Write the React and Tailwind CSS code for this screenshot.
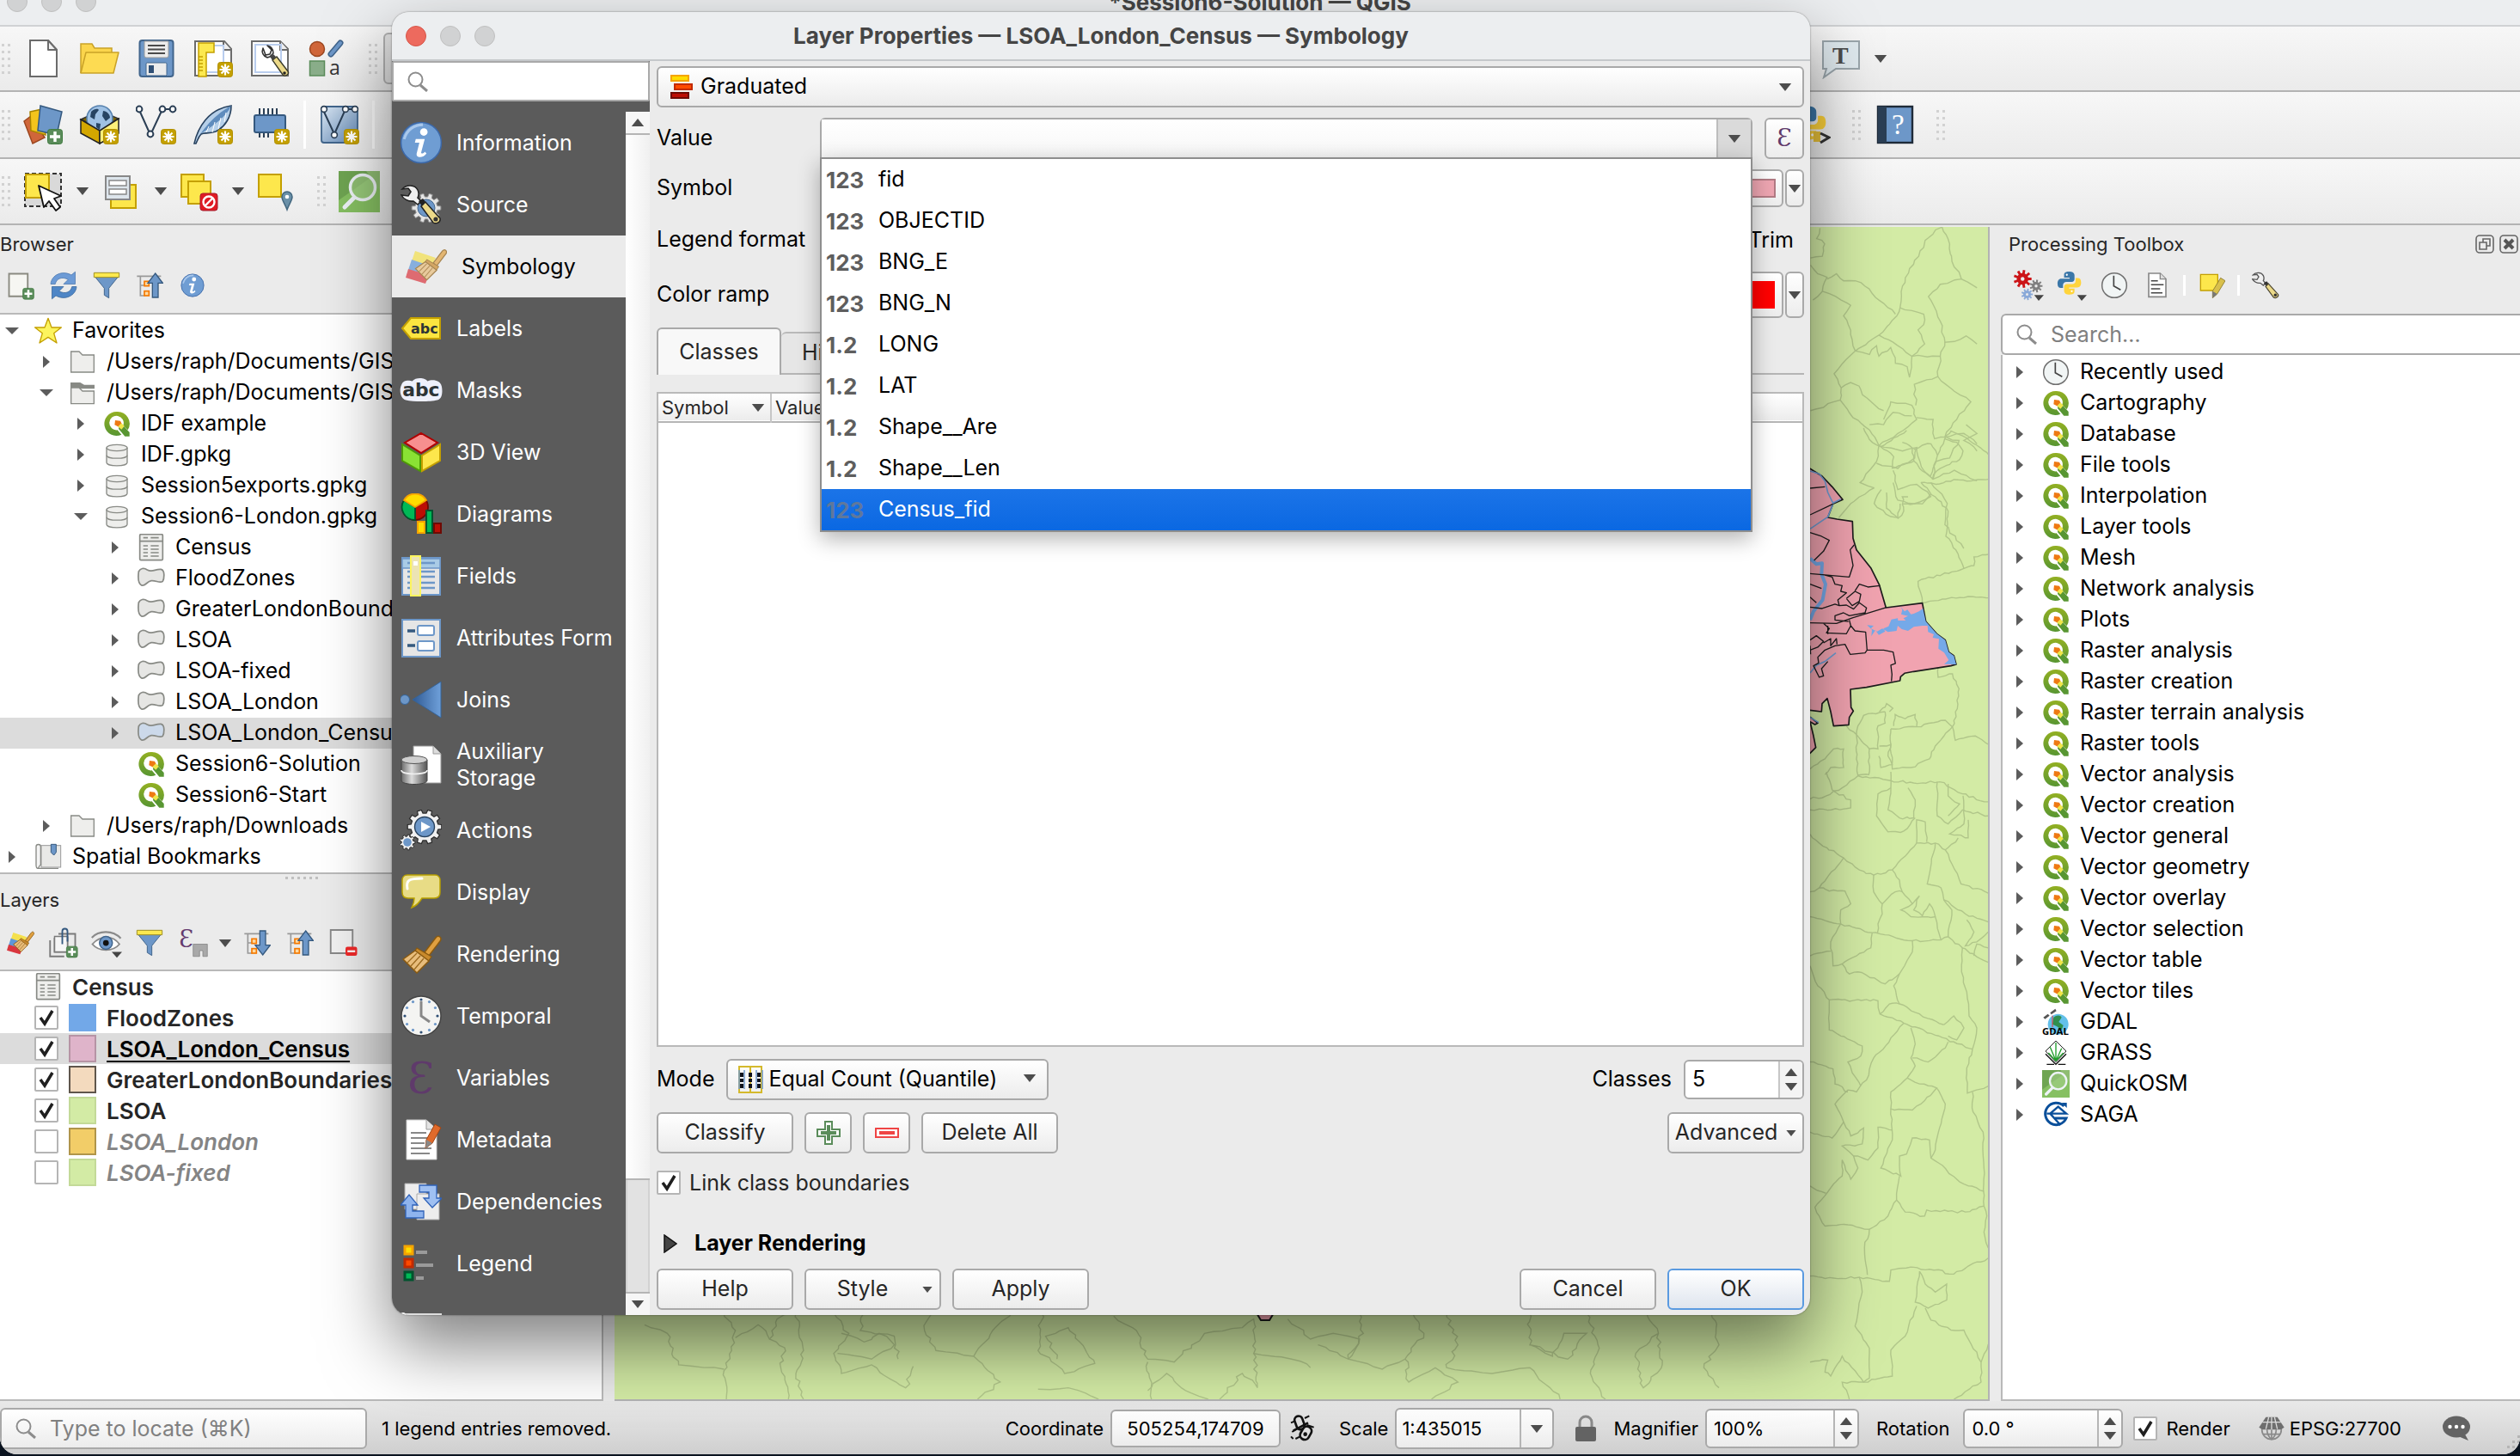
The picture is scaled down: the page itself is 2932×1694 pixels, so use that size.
import React from "react";

/* ---------- small shared drawings ---------- */

function Svg({ size = "size-12", vb = "0 0 48 48", children, className = "" }) {
  return (
    <svg viewBox={vb} className={`${size} shrink-0 ${className}`} fill="none" aria-hidden="true">
      {children}
    </svg>
  );
}

function gear(cx, cy, outer, inner, teeth) {
  let d = "";
  for (let i = 0; i < teeth; i++) {
    const a = (i / teeth) * Math.PI * 2;
    const s = (Math.PI * 2) / teeth;
    const pts = [
      [inner, a - s * 0.3],
      [outer, a - s * 0.2],
      [outer, a + s * 0.2],
      [inner, a + s * 0.3],
    ];
    pts.forEach(([r, t], k) => {
      d += `${i === 0 && k === 0 ? "M" : "L"}${(cx + r * Math.cos(t)).toFixed(1)} ${(cy + r * Math.sin(t)).toFixed(1)}`;
    });
  }
  return d + "Z";
}

const Down = ({ className = "", size = "h-[9px] w-4" }) => (
  <svg viewBox="0 0 16 10" className={`${size} shrink-0 ${className}`} aria-hidden="true">
    <path d="M0 0h16L8 10z" fill="#4d4d4d" />
  </svg>
);
const Up = ({ className = "" }) => (
  <svg viewBox="0 0 16 10" className={`h-[9px] w-4 shrink-0 ${className}`} aria-hidden="true">
    <path d="M0 10h16L8 0z" fill="#4d4d4d" />
  </svg>
);

const NewBadge = ({ x = 28, y = 29 }) => (
  <g transform={`translate(${x} ${y})`}>
    <rect x=".5" y=".5" width="17" height="17" rx="3" fill="#c4a000" stroke="#b08f00" />
    <path d="M9 2.5v13M2.5 9h13M4.5 4.5l9 9M13.5 4.5l-9 9" stroke="#fff" strokeWidth="2.2" />
  </g>
);
const PlusBadge = ({ x = 29, y = 29 }) => (
  <g transform={`translate(${x} ${y})`}>
    <rect x=".5" y=".5" width="17" height="17" rx="3" fill="#5a8c5a" stroke="#3f7a3f" />
    <path d="M9 3v12M3 9h12" stroke="#fff" strokeWidth="3.4" />
  </g>
);

/* ---------- toolbar icons ---------- */

const NewFile = () => (
  <Svg>
    <path d="M9 3h21l10 11v31H9z" fill="#fff" stroke="#6b6b6b" strokeWidth="2" />
    <path d="M30 3v11h10z" fill="#f2f2f2" stroke="#6b6b6b" strokeWidth="2" strokeLinejoin="round" />
  </Svg>
);
const OpenFolder = () => (
  <Svg>
    <path d="M2 41V7h13l3 5h20v6" fill="#fbd54c" stroke="#c9a227" strokeWidth="1.5" />
    <path d="M2 41 8 17h38l-6 24z" fill="#fddb52" stroke="#c9a227" strokeWidth="1.5" strokeLinejoin="round" />
  </Svg>
);
const Save = () => (
  <Svg>
    <rect x="4.5" y="3" width="39" height="42" rx="3" fill="#6d97c8" stroke="#41658c" strokeWidth="2" />
    <path d="M10 4h28v17a2 2 0 0 1-2 2H12a2 2 0 0 1-2-2z" fill="#ececec" stroke="#9a9a9a" />
    <path d="M14 9h20M14 13.500h20M14 18h20" stroke="#4a4a4a" strokeWidth="1.8" />
    <rect x="12" y="29" width="24" height="15" rx="1.500" fill="#ececec" stroke="#41658c" />
    <rect x="15" y="32" width="6" height="9" fill="#2f4f75" />
  </Svg>
);
const NewLayout = () => (
  <Svg>
    <path d="M3 4h34l8 9v31H3z" fill="#fff" stroke="#6b6b6b" strokeWidth="2" />
    <path d="M36 4v10h9" fill="#eee" stroke="#6b6b6b" strokeWidth="2" />
    <rect x="8" y="9" width="28" height="31" stroke="#b9cdee" strokeWidth="2" />
    <path d="M7 6h18v11h-9v28H7z" fill="#fce94f" stroke="#c4a000" strokeWidth="1.500" />
    <path d="M7 22h5M7 26h5M7 30h5M7 34h5M7 38h5" stroke="#c4a000" strokeWidth="1.500" />
    <NewBadge x={29} y={28} />
  </Svg>
);
const Wrench = () => (
  <g>
    <path d="M16 12c-2 5 0 9 5 11l3-1 4-4c0-4-2-8-7-9l5 5-2 5-5 1z" fill="#f4f4f4" stroke="#333" strokeWidth="1.600" strokeLinejoin="round" />
    <path d="m24 22 4-3 3 3-4 4z" fill="#444" />
    <path d="m27 26 5-4 13 17c2 3-3 7-6 4z" fill="#ecd988" stroke="#3a3a2a" strokeWidth="1.400" />
    <circle cx="41" cy="41" r="1.800" fill="#222" />
  </g>
);
const LayoutManager = () => (
  <Svg>
    <path d="M3 4h33l9 9v31H3z" fill="#fff" stroke="#6b6b6b" strokeWidth="2" />
    <path d="M36 4v10h9" fill="#eee" stroke="#6b6b6b" strokeWidth="2" />
    <rect x="7" y="8" width="30" height="32" stroke="#b9cdee" strokeWidth="2" />
    <Wrench />
  </Svg>
);
const StyleManager = () => (
  <Svg>
    <circle cx="13" cy="13" r="8.500" fill="#d0663a" stroke="#9c4720" strokeWidth="1.500" />
    <path d="m40 6-11 13" stroke="#41658c" strokeWidth="7" strokeLinecap="round" />
    <path d="m40 6-11 13" stroke="#6d97c8" strokeWidth="4" strokeLinecap="round" />
    <rect x="4.500" y="27" width="17" height="17" fill="#8aae8a" stroke="#5a8c5a" strokeWidth="1.500" />
    <text x="27" y="43" fontFamily="Open Sans, sans-serif" fontSize="23" fill="#333">a</text>
  </Svg>
);
const DataSource = () => (
  <Svg>
    <path d="m2 20 8-6 16 25-14 7z" fill="#d0663a" stroke="#9c4720" strokeWidth="1.500" />
    <path d="m9 9 14-3 4 30-17-5z" fill="#f4c41c" stroke="#a88400" strokeWidth="1.500" />
    <path d="m21 2 25 7-6 27-22-5z" fill="#6d97c8" stroke="#35597f" strokeWidth="1.500" />
    <PlusBadge />
  </Svg>
);
const GeoPackage = () => (
  <Svg>
    <path d="M2 18 24 8l22 9-21 12z" fill="#7d6500" stroke="#333" strokeWidth="1.500" />
    <circle cx="24" cy="17" r="15" fill="#9fc1e4" stroke="#5580ad" strokeWidth="1.500" />
    <path d="M14 9c4-4 8-4 9-2l-4 5-1 6-5-3zM28 8c4 0 8 4 8 8l-5 4-4-6zM20 22l5 1-1 7-4-3z" fill="#274463" />
    <path d="m2 18 22 13v15L2 34z" fill="#d4a700" stroke="#222" strokeWidth="1.500" />
    <path d="m46 17-22 14v15l22-12z" fill="#fcf07a" stroke="#222" strokeWidth="1.500" />
    <NewBadge />
  </Svg>
);
const Shapefile = () => (
  <Svg>
    <path d="M4 7 17 36 31 6h11" stroke="#2b3f55" strokeWidth="2" />
    {[[4, 6], [17, 35], [31, 6], [43, 6]].map(([x, y]) => (
      <circle key={x} cx={x} cy={y} r="3.400" fill="#fff" stroke="#2b3f55" strokeWidth="2" />
    ))}
    <NewBadge x={29} />
  </Svg>
);
const Feather = () => (
  <Svg>
    <path d="M2 46C6 28 18 6 45 2c0 12-6 24-18 30-8 3-13 1-17 3-3 3-4 7-6 11z" fill="#b5cfe9" stroke="#27415e" strokeWidth="1.600" />
    <path d="M9 35C18 22 30 10 45 2 40 14 26 24 9 35z" fill="#5f8cbd" />
    <path d="m16 33 3-7m4 7 3-12m4 8 3-13m4 5 2-11" stroke="#fff" strokeWidth="1" />
    <NewBadge x={29} />
  </Svg>
);
const Memory = () => (
  <Svg>
    <path d="M12 5v9m5-9v9m5-9v9m5-9v9m5-9v9M12 31v8m5-8v8m5-8v8" stroke="#2b3f55" strokeWidth="2" />
    <rect x="6" y="13" width="36" height="20" rx="2" fill="#6d97c8" stroke="#35597f" strokeWidth="2" />
    <NewBadge x={29} />
  </Svg>
);
const VirtualLayer = () => (
  <Svg>
    <defs>
      <linearGradient id="vl" x1="0" y1="0" x2="1" y2="1">
        <stop stopColor="#dbe8f4" />
        <stop offset="1" stopColor="#5f86b4" />
      </linearGradient>
    </defs>
    <rect x="3" y="3" width="42" height="42" rx="3" fill="url(#vl)" stroke="#41658c" strokeWidth="1.800" />
    <path d="M5 7 18 35 31 6h12" stroke="#2b3f55" strokeWidth="2" />
    {[[6, 6], [18, 36], [31, 6], [42, 6]].map(([x, y]) => (
      <circle key={x} cx={x} cy={y} r="3.400" fill="#fff" stroke="#2b3f55" strokeWidth="1.600" />
    ))}
    <NewBadge x={29} />
  </Svg>
);
const SelectFeatures = () => (
  <Svg>
    <rect x="3" y="3" width="42" height="38" fill="#d9d9d9" stroke="#333" strokeWidth="2" strokeDasharray="5 3" />
    <rect x="4" y="4" width="27" height="27" fill="#fde74c" stroke="#c4a000" strokeWidth="2" />
    <path d="m19 17 6 25 6-7 8 11 5-4-7-10 8-3z" fill="#fff" stroke="#111" strokeWidth="1.800" strokeLinejoin="round" />
  </Svg>
);
const SelectByValue = () => (
  <Svg>
    <rect x="12" y="16" width="29" height="27" fill="#fde74c" stroke="#c4a000" strokeWidth="2" />
    <rect x="6" y="6" width="28" height="27" fill="#dde5ec" stroke="#888" strokeWidth="2" />
    <rect x="10" y="11" width="20" height="6" fill="#fff" stroke="#888" strokeWidth="1.500" />
    <rect x="10" y="21" width="20" height="6" fill="#fff" stroke="#888" strokeWidth="1.500" />
  </Svg>
);
const Deselect = () => (
  <Svg>
    <rect x="3" y="4" width="26" height="26" fill="#fde74c" stroke="#c4a000" strokeWidth="2" />
    <rect x="11" y="12" width="26" height="26" fill="#fde74c" stroke="#c4a000" strokeWidth="2" />
    <rect x="25" y="26" width="20" height="20" rx="3" fill="#e01b24" stroke="#a51d2d" />
    <circle cx="35" cy="36" r="6.500" fill="#e01b24" stroke="#fff" strokeWidth="2.400" />
    <path d="m31 40 8-8" stroke="#fff" strokeWidth="2.400" />
  </Svg>
);
const SelectLocation = () => (
  <Svg>
    <rect x="4" y="4" width="26" height="26" fill="#fde74c" stroke="#c4a000" strokeWidth="2" />
    <path d="M37 45c-3-8-6-11-6-15a6 6 0 0 1 12 0c0 4-3 7-6 15z" fill="#6a90a8" stroke="#43677f" strokeWidth="1.500" />
    <circle cx="37" cy="30" r="2.300" fill="#fff" />
  </Svg>
);
const QuickOsm = ({ size = "size-12" }) => (
  <Svg size={size}>
    <path d="M0 0h48v48H0z" fill="#86c062" />
    <path d="M0 0h48L0 34z" fill="#6fa552" />
    <path d="M48 0v22L32 0z" fill="#8fbd72" />
    <circle cx="28" cy="19" r="14.500" fill="#a3cf88" fillOpacity=".6" stroke="#eef3f7" strokeWidth="3.500" />
    <path d="M18 31 7 42" stroke="#eef3f7" strokeWidth="5" strokeLinecap="round" />
  </Svg>
);
const TextNote = () => (
  <Svg>
    <path d="M4 4h42v32H19L5 46l3-10H4z" fill="#dfe9ee" stroke="#9aa5ab" strokeWidth="2" />
    <text x="15" y="30" fontFamily="Liberation Serif, serif" fontSize="28" fontWeight="bold" fill="#4b4b4b">T</text>
  </Svg>
);
const PyShape = () => (
  <>
    <path d="M24 3c-9 0-9 4-9 7v4h10v2H10c-5 0-7 4-7 9s2 8 6 8h4v-5c0-4 3-6 6-6h10c3 0 5-2 5-5v-7c0-5-4-7-10-7z" fill="#3b77a8" />
    <path d="M25 45c9 0 9-4 9-7v-4H24v-2h15c5 0 7-4 7-9s-2-8-6-8h-4v5c0 4-3 6-6 6H20c-3 0-5 2-5 5v7c0 5 4 7 10 7z" fill="#ffd43b" />
    <circle cx="20" cy="9" r="1.800" fill="#fff" />
    <circle cx="29" cy="39" r="1.800" fill="#fff" />
  </>
);
const Book = () => (
  <Svg>
    <rect x="4" y="3" width="40" height="42" fill="#6d97c8" stroke="#1e2a38" strokeWidth="2.400" />
    <path d="M4 3h10v42H4z" fill="#2b3f55" />
    <text x="20" y="35" fontFamily="Liberation Serif, serif" fontSize="33" fill="#fff">?</text>
  </Svg>
);

/* ---------- panel icons ---------- */

const small = "size-9";
const AddLayer = () => (
  <Svg size={small}>
    <path d="M6 6h29v35H6z" fill="#f6f6f2" stroke="#8a8a80" strokeWidth="2.500" />
    <g transform="translate(0 4)"><PlusBadge x={27} y={24} /></g>
  </Svg>
);
const Refresh = () => (
  <Svg size={small}>
    <path d="M4 22C5 8 22 0 36 8l6-5v19H24l7-7c-9-5-18-2-20 7z" fill="#6d9bd6" stroke="#4a76ad" />
    <path d="M44 26c-1 14-18 22-32 14l-6 5V26h18l-7 7c9 5 18 2 20-7z" fill="#4f86c6" stroke="#35649a" />
  </Svg>
);
const Funnel = () => (
  <Svg size="size-8">
    <path d="M3 8h42L28 29v17l-8-5V29z" fill="#6d97c8" stroke="#41658c" strokeWidth="1.500" />
    <path d="M2 2h44v8H2z" fill="#fce94f" stroke="#a09020" strokeWidth="1.500" />
  </Svg>
);
const TreeArrow = ({ down }) => (
  <Svg size="size-8">
    <path d="M2 8h42M8 8v34h8M8 24h8" stroke="#999" strokeWidth="2.500" />
    <rect x="15" y="17" width="8" height="8" fill="#ffd9a0" stroke="#f57900" strokeWidth="2.500" />
    <rect x="15" y="34" width="8" height="8" fill="#ffd9a0" stroke="#f57900" strokeWidth="2.500" />
    {down ? (
      <path d="m34 45 13-17h-8V3H29v25h-8z" fill="#6d97c8" stroke="#35597f" strokeWidth="2" />
    ) : (
      <path d="M34 3 47 20h-8v25H29V20h-8z" fill="#6d97c8" stroke="#35597f" strokeWidth="2" />
    )}
  </Svg>
);
const Info = ({ size = "size-7" }) => (
  <Svg size={size}>
    <circle cx="24" cy="24" r="22.500" fill="#6f9dd3" stroke="#3c68a8" strokeWidth="1.500" />
    <path d="M5 20C8 10 16 4 26 4" stroke="#a9c8ec" strokeWidth="3" />
    <circle cx="27" cy="12" r="4.200" fill="#fff" />
    <path d="M18 20h10l-4 15c0 2 3 1 4-1l2 2c-3 5-12 6-11 0l3-12h-5z" fill="#fff" />
  </Svg>
);
const Brush = ({ palette = true, size = "size-8", faded }) => (
  <Svg size={size} className={faded ? "opacity-70" : ""}>
    {palette && (
      <>
        <path d="m11 6 24 8-5 10L7 18z" fill="#f4e04d" />
        <path d="m7 16 23 8-3 9L3 28z" fill="#5e97d8" />
        <path d="m3 27 24 7-4 10L0 37z" fill="#d9363e" />
      </>
    )}
    <g transform={palette ? "translate(9 2) scale(.82)" : undefined}>
      <path d="m28 22 13-17c3-4 8 0 5 4L33 26z" fill="#e0a040" stroke="#8a5a10" strokeWidth="1.500" />
      <path d="m19 17 17 10-4 6-16-11z" fill="#c98a2c" stroke="#8a5a10" strokeWidth="1.200" />
      <path d="M17 20 3 30l16 16 14-14z" fill="#e8bd7c" stroke="#8a5a10" strokeWidth="1.500" />
      <path d="M19 23 8 34m15-8L12 38m15-9L16 42" stroke="#9c6a20" strokeWidth="1.300" />
    </g>
  </Svg>
);
const AddGroup = () => (
  <Svg size={small}>
    <path d="M16 10h26v26M10 16v22h20V14M3 20v25h22" stroke="#7a7a7a" strokeWidth="2.500" />
    <path d="M10 14h20v24H10z" fill="#f6f6f6" stroke="#7a7a7a" strokeWidth="2" />
    <path d="M22 26V6a4 4 0 0 1 8 0v16" stroke="#35597f" strokeWidth="2.500" />
    <g transform="translate(0 2)"><PlusBadge x={28} y={27} /></g>
  </Svg>
);
const Eye = () => (
  <Svg size={small}>
    <path d="M1 16C12 4 34 4 46 17" stroke="#8a8a8a" strokeWidth="3" />
    <path d="M2 26c12-14 32-14 42 0-10 12-32 12-42 0z" fill="#fff" stroke="#8a8a8a" strokeWidth="2.500" />
    <circle cx="23" cy="24" r="10" fill="#6d97c8" stroke="#41658c" strokeWidth="2" />
    <circle cx="23" cy="24" r="4.500" fill="#111" />
    <path d="M32 38h16l-8 9z" fill="#444" />
  </Svg>
);
const EpsFilter = () => (
  <Svg size={small}>
    <text x="3" y="30" fontFamily="DejaVu Serif, serif" fontSize="36" fill="#643b6f">Ɛ</text>
    <path d="M25 26h22v19h-7v-9h-5v9H25z" fill="#a9a9a9" stroke="#7f7f7f" />
  </Svg>
);
const RemoveLayer = () => (
  <Svg size={small}>
    <path d="M5 4h34v36H5z" fill="#f1f1f1" stroke="#888" strokeWidth="2.500" />
    <rect x="28" y="30" width="18" height="14" rx="3" fill="#ef2929" />
    <path d="M31 37h12" stroke="#fff" strokeWidth="3" />
  </Svg>
);
const Gears = () => (
  <Svg size={small}>
    <path d={gear(15, 14, 14, 9, 9)} fill="#cc1417" />
    <circle cx="15" cy="14" r="3" fill="#ebebeb" />
    <path d={gear(36, 25, 10, 6.5, 9)} fill="#7f7f7f" />
    <circle cx="36" cy="25" r="2.300" fill="#ebebeb" />
    <path d={gear(22, 38, 9, 6, 9)} fill="#8aa9d8" />
    <circle cx="22" cy="38" r="2" fill="#ebebeb" />
    <path d="M33 39h15l-8 9z" fill="#444" />
  </Svg>
);
const PythonSmall = () => (
  <Svg size={small}>
    <g transform="scale(.85)"><PyShape /></g>
    <path d="M33 39h15l-8 9z" fill="#444" />
  </Svg>
);
const Clock = ({ size = "size-8" }) => (
  <Svg size={size}>
    <circle cx="24" cy="24" r="21.500" fill="#f1f5f5" stroke="#6f6f6f" strokeWidth="2.200" />
    <path d="M23 7v18l12 7" stroke="#444" strokeWidth="2.500" />
  </Svg>
);
const Report = () => (
  <Svg size="size-8">
    <path d="M9 3h20l10 10v31H9z" fill="#fff" stroke="#888" strokeWidth="2.500" />
    <path d="M29 3v10h10" fill="#ddd" stroke="#888" strokeWidth="2" />
    <path d="M13 16h12M13 23h22M13 30h16M13 37h20" stroke="#444" strokeWidth="2.200" />
  </Svg>
);
const EditNote = () => (
  <Svg size="size-8">
    <path d="M5 5h30v28H5z" fill="#fde74c" stroke="#c4a000" strokeWidth="2" />
    <path d="m26 34 14-23 8 5-14 23-8 7z" fill="#d9c04c" stroke="#8a7a30" strokeWidth="1.300" />
    <path d="m26 34 8 5-8 7z" fill="#777" />
  </Svg>
);
const wrenchHead = "M2 6c5-6 15-5 18 1 2 4 1 7 0 9l4 4-4 4-5-4c-6 1-12-3-14-7l8 1 3-5-3-4z";
const Options = () => (
  <Svg size="size-8">
    <path d={wrenchHead} fill="#f0f0f0" stroke="#555" strokeWidth="2" />
    <path d="m21 20 5-3 4 5-5 4z" fill="#333" />
    <path d="m24 26 5-5 17 19c1 5-5 7-8 5z" fill="#ecd988" stroke="#4a4430" strokeWidth="1.800" />
    <circle cx="41" cy="41" r="2.600" fill="#333" />
  </Svg>
);

/* ---------- tree icons ---------- */

const QIcon = () => (
  <Svg size="size-8">
    <defs>
      <linearGradient id="qg" x1="0" y1="0" x2="0" y2="1">
        <stop stopColor="#93b023" />
        <stop offset="1" stopColor="#589632" />
      </linearGradient>
    </defs>
    <path d="M24 3a21 21 0 1 0 8 40l-7-8a12.500 12.500 0 1 1 10-8l8 8A21 21 0 0 0 24 3z" fill="url(#qg)" />
    <path d="m28 27 6-1 12 13v7h-8L27 33z" fill="#589632" />
    <path d="m21 18 9 1 3 6-5 5-8-4z" fill="#ee7913" />
    <path d="m26 29 6-6 5 5-5 6z" fill="#f0e64a" />
  </Svg>
);
const Star = () => (
  <Svg size="size-8">
    <path d="m24 2 6 16h17L34 28l5 17-15-10L9 45l5-17L1 18h17z" fill="#fcf45e" stroke="#c4a000" strokeWidth="2" strokeLinejoin="round" />
  </Svg>
);
const Folder = ({ open }) => (
  <Svg size="size-8">
    {open && <path d="M3 6h17l7 4h18v7H3z" fill="#888a85" />}
    <path d={open ? "M4 15h14l6 6h20v22H4z" : "M4 6h14l6 6h20v30H4z"} fill="#eeeeec" stroke="#888a85" strokeWidth="2" />
  </Svg>
);
const Database = () => (
  <Svg size="size-8">
    <path d="M6 12v26c0 7 36 7 36 0V12" fill="#eeeeec" stroke="#888a85" strokeWidth="2" />
    <ellipse cx="24" cy="12" rx="18" ry="5.500" fill="#eeeeec" stroke="#888a85" strokeWidth="2" />
    <path d="M6 25c0 7 36 7 36 0" stroke="#888a85" strokeWidth="2" />
  </Svg>
);
const TableIcon = () => (
  <Svg size="size-8">
    <rect x="4" y="1" width="40" height="45" rx="2" fill="#eeeeec" stroke="#888a85" strokeWidth="2.500" />
    <path d="M4 13h40M10 7h8m5 0h14M10 21h8m5 0h14M10 27h8m5 0h14M10 33h8m5 0h14M10 39h8m5 0h14" stroke="#888a85" strokeWidth="2.400" />
  </Svg>
);
const Polygon = ({ active }) => (
  <Svg size="size-8">
    <path
      d="M2 12c3-6 9-7 15-3 9 5 14-2 24-1 8 2 5 18 3 21-5 4-12-2-20-1-9 2-10 10-17 8C1 33 1 20 2 12z"
      fill={active ? "#ccd9ea" : "#e6e6e4"}
      stroke="#888a85"
      strokeWidth="2.600"
    />
  </Svg>
);
const Bookmarks = () => (
  <Svg size="size-8">
    <rect x="12" y="4" width="34" height="38" fill="#e9e9e7" stroke="#999" strokeWidth="1.500" />
    <path d="M3 6c0-5 8-5 8 0v32c-3 0-3 6-5 6-3 0-3-4-3-6z" fill="#f4f4f4" stroke="#888a85" strokeWidth="2" />
    <path d="M6 44h36" stroke="#888a85" strokeWidth="2" />
    <path d="M29 2h9v14l-4 5-5-5z" fill="#6d97c8" stroke="#35597f" strokeWidth="1.500" />
  </Svg>
);
const Gdal = () => (
  <Svg size="size-8">
    <circle cx="28" cy="28" r="18" fill="#63c0ea" />
    <path d="M20 16c6-5 12-4 14 0l-5 8 8 6-3 8-8-6-8-4z" fill="#2f8f4e" />
    <path d="m2 16 8-6 3 3-8 6zM14 8l9-7 2 4-9 6z" fill="#555" />
    <path d="M18 13v20" stroke="#e33" strokeWidth="1.500" />
    <text x="0" y="47" fontFamily="Open Sans, sans-serif" fontWeight="bold" fontSize="17" fill="#000">GDAL</text>
  </Svg>
);
const Grass = () => (
  <Svg size="size-8">
    <path d="m24 3 18 18-18 19L6 21z" stroke="#222" strokeWidth="1.500" fill="#fff" />
    <path d="M6 26l18 18 18-18M8 44h13m7 0h13" stroke="#111" strokeWidth="2" />
    <path d="M24 38V6m0 32L14 14m10 24 10-22M24 38 11 24m13 14 13-14" stroke="#1f9d2a" strokeWidth="2" />
  </Svg>
);
const Saga = () => (
  <Svg size="size-8">
    <path d="M38 9A19 19 0 1 0 42 30H22" stroke="#0a4f9a" strokeWidth="4.500" />
    <path d="M8 22h34L28 10 14 22l18 20" stroke="#0a4f9a" strokeWidth="3.600" />
    <path d="M34 3h9v9z" fill="#0a4f9a" />
  </Svg>
);

/* ---------- dialog sidebar icons ---------- */

const SourceIcon = () => (
  <Svg size="size-12">
    <path d={gear(30, 28, 17, 13, 10)} fill="#e5e5e5" stroke="#8f8f8f" />
    <circle cx="30" cy="28" r="10" fill="#6d97c8" stroke="#41658c" />
    <path d={wrenchHead} fill="#f0f0f0" stroke="#222" strokeWidth="1.600" />
    <path d="m21 20 5-3 4 5-5 4z" fill="#222" />
    <path d="m24 26 5-5 17 19c1 5-5 7-8 5z" fill="#ecd988" stroke="#222" strokeWidth="1.500" />
    <circle cx="41" cy="41" r="2.600" fill="#333" />
  </Svg>
);
const LabelsIcon = () => (
  <Svg size="size-12">
    <path d="m2 24 10-12h34v24H12z" fill="#fce540" stroke="#c4a000" strokeWidth="2" />
    <text x="12" y="30" fontFamily="DejaVu Sans, sans-serif" fontWeight="bold" fontSize="16" fill="#2d3436">abc</text>
  </Svg>
);
const MasksIcon = () => (
  <Svg size="size-[50px]">
    <path d="M2 18c2-6 9-5 12-4 4-5 15-4 17 0 6-3 15-1 16 6 1 5 1 14-5 15-8 2-27 2-35 0-6-1-8-11-5-17z" fill="#eef0fb" />
    <text x="3" y="31" fontFamily="DejaVu Sans, sans-serif" fontWeight="bold" fontSize="21" fill="#2d3436">abc</text>
  </Svg>
);
const CubeIcon = () => (
  <Svg size="size-12">
    <path d="m24 2 19 11-19 12L5 13z" fill="#f78f8f" stroke="#b00000" strokeWidth="2" />
    <path d="m2 15 21 13v18L2 34z" fill="#8ae234" stroke="#4e9a06" strokeWidth="2" />
    <path d="M46 15 25 28v18l21-12z" fill="#fde74c" stroke="#c4a000" strokeWidth="2" />
  </Svg>
);
const DiagramsIcon = () => (
  <Svg size="size-12">
    <circle cx="17" cy="16" r="15" fill="#bb0e05" stroke="#6e0a04" strokeWidth="1.800" />
    <path d="M17 16v15A15 15 0 0 1 4 8z" fill="#00b956" stroke="#00532e" strokeWidth="1.800" />
    <path d="M17 16 4 8a15 15 0 0 1 26 0z" fill="#ffdc00" stroke="#f5a400" strokeWidth="1.800" />
    <rect x="20" y="33" width="8" height="13" fill="#ffdc00" stroke="#f5a400" strokeWidth="2" />
    <rect x="30" y="20" width="7" height="26" fill="#00b956" stroke="#00532e" strokeWidth="2" />
    <rect x="39" y="35" width="8" height="11" fill="#bb0e05" stroke="#6e0a04" strokeWidth="2" />
  </Svg>
);
const FieldsIcon = () => (
  <Svg size="size-12">
    <rect x="2" y="3" width="44" height="43" fill="#e6e6e6" stroke="#6d97c8" strokeWidth="2" />
    <path d="M2 4h44v11H2z" fill="#a9cbe6" stroke="#6d97c8" strokeWidth="1.500" />
    <path d="M8 9h32M8 19h32M8 25h32M8 32h32M8 38h32" stroke="#6d97c8" strokeWidth="2.400" />
    <rect x="12" y="1" width="11" height="46" fill="#ece4b4" stroke="#fcf45e" strokeWidth="2" />
    <rect x="15" y="7" width="5" height="5" fill="#fff" />
  </Svg>
);
const FormIcon = () => (
  <Svg size="size-12">
    <rect x="2" y="3" width="44" height="43" fill="#e6e6e6" stroke="#6d97c8" strokeWidth="2" />
    <path d="M8 16h9M8 33h9" stroke="#35597f" strokeWidth="3.500" />
    <rect x="20" y="10" width="19" height="11" rx="2" fill="#fff" stroke="#6d97c8" strokeWidth="2" />
    <rect x="20" y="28" width="19" height="11" rx="2" fill="#fff" stroke="#6d97c8" strokeWidth="2" />
  </Svg>
);
const JoinsIcon = () => (
  <Svg size="size-12">
    <defs>
      <linearGradient id="jn"><stop stopColor="#2f5a94" /><stop offset="1" stopColor="#6fa0da" /></linearGradient>
    </defs>
    <circle cx="5" cy="24" r="5.500" fill="#6d97c8" stroke="#35649a" />
    <path d="M14 24 47 3v42z" fill="url(#jn)" stroke="#35649a" />
  </Svg>
);
const StorageIcon = () => (
  <Svg size="size-12">
    <defs>
      <linearGradient id="st"><stop stopColor="#6b6b6b" /><stop offset=".4" stopColor="#dcdcdc" /><stop offset="1" stopColor="#555" /></linearGradient>
    </defs>
    <path d="M15 2h23l9 9v34H15z" fill="#fff" stroke="#999" />
    <path d="M38 2v9h9" fill="#ddd" stroke="#999" />
    <path d="M1 18v24c0 6 30 6 30 0V18z" fill="url(#st)" stroke="#444" />
    <ellipse cx="16" cy="18" rx="15" ry="4.500" fill="#cfcfcf" stroke="#555" />
    <path d="M1 30c0 6 30 6 30 0" stroke="#f0f0f0" strokeWidth="1.600" />
  </Svg>
);
const ActionsIcon = () => (
  <Svg size="size-12">
    <path d={gear(28, 20, 20, 16, 10)} fill="#f0f0f0" stroke="#2a2a2a" strokeWidth="1.200" />
    <circle cx="28" cy="20" r="11.500" fill="#6d97c8" stroke="#27415e" strokeWidth="1.400" />
    <path d="m24 14 11 6-11 6z" fill="#fff" />
    <path d={gear(8, 38, 9, 7, 9)} fill="#f0f0f0" stroke="#2a2a2a" />
    <circle cx="8" cy="38" r="4.800" fill="#6d97c8" />
  </Svg>
);
const DisplayIcon = () => (
  <Svg size="size-12">
    <path d="M8 4h32c4 0 6 3 6 6v14c0 5-3 7-7 7H25c-3 5-7 9-12 11 2-4 3-8 3-11H9c-4 0-7-2-7-7V10c0-3 2-6 6-6z" fill="#e8dc86" stroke="#b8a000" strokeWidth="1.500" />
    <path d="M8 20c-2-10 2-12 17-12" stroke="#fff" strokeWidth="3" strokeLinecap="round" />
  </Svg>
);
const TemporalIcon = () => (
  <Svg size="size-12">
    <circle cx="24" cy="24" r="23" fill="#f4f4f2" stroke="#444" strokeWidth="1.500" />
    {Array.from({ length: 12 }, (_, i) => (
      <circle
        key={i}
        cx={24 + 19 * Math.cos((i * Math.PI) / 6)}
        cy={24 + 19 * Math.sin((i * Math.PI) / 6)}
        r="1.600"
        fill={i % 3 ? "#6d97c8" : "#2f4f75"}
      />
    ))}
    <path d="M24 7v17l10 7" stroke="#888" strokeWidth="3" />
  </Svg>
);
const VariablesIcon = () => (
  <Svg size="size-12">
    <text x="8" y="42" fontFamily="DejaVu Serif, serif" fontSize="50" fill="#5f3a6b">Ɛ</text>
  </Svg>
);
const MetadataIcon = () => (
  <Svg size="size-12">
    <path d="M7 1h23l12 11v35H7z" fill="#fff" stroke="#ccc" />
    <path d="M30 1v11h12" fill="#e4e4e4" stroke="#999" />
    <path d="M12 16h18M12 22h20M12 28h16M12 34h24M12 40h22" stroke="#888" strokeWidth="1.800" />
    <path d="m30 24 10-18 7 4-10 18-8 6z" fill="#e06a2b" stroke="#a34512" />
    <path d="m30 24 7 4-8 6z" fill="#888" />
  </Svg>
);
const DependenciesIcon = () => (
  <Svg size="size-12">
    <path d="M5 3h25v30H5z" fill="#ededed" stroke="#aaa" />
    <path d="M19 15h26v30H19z" fill="#ededed" stroke="#aaa" />
    <path d="M22 5h20v15h6L37 31 27 20h6v-7H22z" fill="#9fc0f2" stroke="#2f62b8" strokeWidth="1.300" />
    <path d="M27 43H6V28H0l10-12 10 12h-6v7h13z" fill="#8fb4ee" stroke="#2f62b8" strokeWidth="1.300" />
  </Svg>
);
const LegendIcon = () => (
  <Svg size="size-12">
    <rect x="5" y="4" width="9" height="9" fill="#ffdc00" stroke="#f5a400" strokeWidth="3" />
    <rect x="5" y="19" width="9" height="9" fill="#ff4a00" stroke="#c22a00" strokeWidth="3" />
    <rect x="5" y="34" width="9" height="9" fill="#00b956" stroke="#00532e" strokeWidth="3" />
    <path d="M18 11h13M18 26h20M18 41h9" stroke="#9a9a9a" strokeWidth="4" />
  </Svg>
);
const LayoutIcon = () => (
  <Svg size="size-12">
    <path d="M2 12h44v32H2z" fill="#6d97c8" stroke="#ddd" strokeWidth="4" />
    <path d="M5 15h38" stroke="#222" strokeWidth="2" />
    <circle cx="3" cy="12" r="3" fill="#f4f4f4" />
  </Svg>
);

/* ---------- form parts ---------- */

function Check({ label, defaultChecked, hideLabel, gap = "gap-3", className = "" }) {
  return (
    <label className={`flex items-center leading-7 ${gap} ${className}`}>
      <span className="grid size-7 shrink-0">
        <input
          type="checkbox"
          defaultChecked={defaultChecked}
          aria-label={hideLabel ? label : undefined}
          className="peer col-start-1 row-start-1 size-7 appearance-none rounded-xs border-2 border-[#b5b5b5] bg-white"
        />
        <svg viewBox="0 0 28 28" className="pointer-events-none invisible col-start-1 row-start-1 size-7 peer-checked:visible" fill="none" aria-hidden="true">
          <path d="m7 14 5 7L21 6" stroke="#1f1f1f" strokeWidth="3.500" />
        </svg>
      </span>
      {!hideLabel && <span>{label}</span>}
    </label>
  );
}

const shade = "bg-linear-to-b from-white to-[#ececec] border-2 border-[#a9a9a9] rounded-md";

function Push({ children, className = "", ...rest }) {
  return (
    <button type="button" className={`flex h-12 items-center justify-center ${shade} ${className}`} {...rest}>
      {children}
    </button>
  );
}

function Grip({ className = "" }) {
  return (
    <span className={`grid shrink-0 grid-cols-2 gap-x-1 gap-y-[5px] ${className}`}>
      {Array.from({ length: 10 }, (_, i) => (
        <span key={i} className="size-[3px] bg-[#d2d2d2]" />
      ))}
    </span>
  );
}

function Lens({ className = "" }) {
  return (
    <svg viewBox="0 0 24 24" className={`size-6 shrink-0 ${className}`} fill="none" aria-hidden="true">
      <circle cx="9.500" cy="9.500" r="8" stroke="#8c8c8c" strokeWidth="2" />
      <path d="m15 16 8 7" stroke="#8c8c8c" strokeWidth="3" />
    </svg>
  );
}

const Tool = ({ label, children, className = "w-[66px]" }) => (
  <button type="button" aria-label={label} className={`flex shrink-0 items-center justify-center ${className}`}>
    {children}
  </button>
);

/* ---------- map ---------- */

function rough(points, amp, seed) {
  let s = seed * 7919 + 17;
  const rnd = () => {
    s = (s * 1103515245 + 12345) % 2147483648;
    return s / 2147483648 - 0.5;
  };
  let d = `M${points[0][0]} ${points[0][1]}`;
  for (let i = 1; i < points.length; i++) {
    const [x0, y0] = points[i - 1];
    const [x1, y1] = points[i];
    const n = Math.max(1, Math.round(Math.hypot(x1 - x0, y1 - y0) / 14));
    for (let k = 1; k <= n; k++) {
      const t = k / n;
      const j = k === n ? 0 : amp;
      d += `L${(x0 + (x1 - x0) * t + rnd() * j).toFixed(1)} ${(y0 + (y1 - y0) * t + rnd() * j).toFixed(1)}`;
    }
  }
  return d;
}

function parse(str) {
  const n = str.split(" ").map(Number);
  const out = [];
  for (let i = 0; i < n.length; i += 2) out.push([n[i], n[i + 1]]);
  return out;
}

const northLines = [
  "1494 652 1480 660 1458 690 1455 710 1425 770 1410 820 1405 880 1398 905 1360 960 1310 1005",
  "1494 652 1510 700 1515 750 1530 780 1535 800 1568 825",
  "1535 800 1490 815 1465 850 1490 920 1500 980 1520 978 1545 962 1568 985",
  "1235 655 1228 685 1245 700 1240 735 1215 740",
  "1215 760 1230 785 1250 795 1240 835 1220 860",
  "1250 800 1270 785 1285 805 1310 805 1330 820 1360 860 1395 900",
  "1240 835 1280 860 1300 875 1285 905 1295 930 1305 990 1310 1005",
  "1405 882 1430 890 1455 900 1455 930 1443 945 1457 985 1430 1020",
  "1310 1005 1340 1015 1355 990 1360 1020 1385 995 1395 1040 1420 1050 1425 1080 1430 1020",
  "1360 960 1390 980 1430 1020 1490 1020 1500 980",
  "1490 1020 1485 1078 1435 1100 1438 1160",
  "1485 1078 1520 1120 1555 1150 1525 1200 1500 1250",
  "1310 1005 1290 1030 1265 1070 1280 1110 1278 1145 1215 1175",
  "1278 1145 1305 1195 1340 1230 1360 1275",
  "1280 1110 1300 1095 1318 1105 1325 1130 1370 1175",
  "1370 1200 1385 1150 1430 1160 1440 1200 1400 1240 1360 1275 1355 1320 1320 1380 1350 1395",
  "1440 1195 1475 1200 1478 1255 1500 1250 1540 1240 1568 1270",
  "1340 1215 1370 1215 1390 1180 1430 1190",
  "1360 1275 1410 1290 1440 1280 1436 1310 1400 1340 1355 1325",
  "1350 1395 1300 1440 1275 1480",
  "1390 1345 1400 1400 1440 1385 1470 1420 1435 1440 1400 1430 1390 1380",
  "1440 1280 1450 1335 1475 1370 1520 1345 1568 1375",
  "1470 1380 1505 1440 1500 1500 1540 1568",
  "1475 1370 1480 1320 1510 1310 1530 1260 1490 1250",
  "1365 1400 1350 1440 1375 1470 1400 1480 1405 1440",
  "1545 1215 1568 1240 1540 1260 1568 1290",
];
const eastLines = [
  "265 0 285 40 325 65 415 8",
  "325 65 370 100 365 140 440 115 435 70 400 50",
  "440 115 470 150 498 168 523 95 548 38 590 50 612 80 600 110 555 130 520 150 505 180",
  "440 75 470 60 500 55 523 95",
  "548 38 570 10 625 35 660 60 703 95",
  "465 190 515 240 560 290 552 378 595 440 615 490 455 535 470 610",
  "615 490 650 480 650 450 703 440",
  "470 610 540 597 630 588 703 593",
  "465 190 530 195 580 180 640 185 703 178",
  "345 225 345 280 385 315 405 290 400 240 420 240",
  "400 265 470 265 500 230",
  "525 835 525 870 575 858 598 910 592 980 575 1043 585 1090 655 1075 703 1105",
  "575 1043 515 1110 495 1155 430 1185 365 1190 360 1105",
  "575 1043 550 1020 450 1043 360 1050",
  "340 990 265 1003 245 1040 240 1070 285 1120 283 1210 245 1212 240 1070",
  "205 1040 240 1070",
  "340 990 340 1030 315 1040 315 1120 283 1120",
  "320 990 345 962 367 978 355 990",
  "370 1040 375 1000 410 1015 445 1000 450 1043",
  "78 1190 130 1155 160 1120 195 1120 195 1185 150 1185 130 1210",
  "320 1110 360 1105 350 1145 365 1175 325 1185 318 1145",
  "360 1105 360 1050",
];
const southLines = [
  "18 68 75 60 130 40 185 10 300 22 380 28 470 25 550 55 640 75",
  "75 0 95 45 160 70 160 90 92 95 18 95",
  "300 0 300 40 290 95 330 115 380 115 385 70 360 40",
  "300 40 255 55 250 110 290 150 345 148 385 115",
  "462 25 462 110 500 130 550 95 640 110",
  "500 30 500 60 540 80 500 110",
  "552 60 555 130 505 155 570 165 570 120",
  "18 156 50 178 135 215 190 245 240 258 305 245 390 178 455 178 490 195 545 280 640 303",
  "240 258 240 300 270 330 270 355 255 380 253 403",
  "390 178 390 120 420 125 425 175",
  "455 178 427 280 475 290 485 320 560 355 640 375",
  "490 195 535 165",
  "18 362 125 380 235 402 375 422 475 420 500 412 550 440 640 476",
  "485 320 513 345 500 412",
  "50 290 135 215",
  "18 300 50 290 85 298 140 298 160 330 125 345 125 380",
  "305 245 330 270 340 300 375 330 335 345 370 362 455 362 475 420",
  "340 300 315 300 270 330",
  "375 330 400 310 380 345 410 360 435 330 455 362",
  "125 380 90 425 98 485 130 480 180 460 230 440 235 402",
  "130 480 155 505 185 500 280 530 330 505 375 450 375 422",
  "18 460 90 448",
  "330 505 310 535 330 580",
  "565 370 590 400 560 435 600 425 640 400",
  "590 460 600 430 640 440",
  "18 485 45 535 85 570 255 572 262 605 345 628 455 658 585 693",
  "262 605 295 580 330 580 400 605 485 632",
  "485 632 520 610 555 640 530 670 500 660",
  "550 440 547 500 565 550 573 610 600 640 585 693",
  "85 570 85 645 200 685 195 710 150 725 195 785",
  "585 693 565 740 567 803 640 785",
  "345 628 300 665 240 715 215 770 180 800 150 795 105 830 135 875 95 915 60 910 18 900",
  "18 725 98 742 105 780 150 800",
  "370 640 385 680 370 715 385 735 357 765 300 800 300 842 375 845 405 830 460 790 400 780 357 765",
  "375 715 430 725 490 690 500 675",
  "300 842 305 920 265 990 335 1010 330 960 355 955 375 915 435 920 440 965 555 1030 625 1048",
  "460 790 490 830 470 890 455 945 440 965",
  "305 895 255 888 255 940 220 970 170 960 130 935 200 930 205 890 160 910 135 875",
  "170 960 185 990 160 1018 130 970 130 1010 100 1030 35 1088 70 1135 150 1132 225 1143 290 1110 320 1070 330 1010",
  "18 1035 73 1053",
  "320 1070 350 1100 418 1110 425 1095 500 1098 560 1100 625 1085 625 990 622 900 587 850 585 800",
  "225 1143 208 1190 218 1257",
  "18 1260 100 1265 190 1263 200 1300 175 1385 225 1440 225 1515 205 1525 130 1525 155 1568",
  "190 1263 295 1273 300 1245 380 1238 450 1245 520 1255 570 1235 640 1215",
  "400 1248 385 1325 430 1340 495 1320 495 1280 455 1300 420 1280 400 1248",
  "390 1335 350 1410 300 1445 305 1510 205 1525 130 1460 90 1510 70 1500 80 1470 18 1475",
  "420 1340 440 1370 510 1395 555 1395 615 1475 615 1525 520 1568",
  "640 1430 615 1475",
  "640 1190 625 1150 635 1110 625 1085",
];
const bottomLines = [
  "105 989 120 1050 115 1120 105 1190 108 1290",
  "0 1030 30 1060 45 1170 105 1185",
  "120 1075 150 1030 165 1080 185 1110 180 1180 190 1290",
  "165 1080 175 1010 190 989",
  "200 990 210 1120 200 1200 210 1290",
  "250 989 270 1060 250 1130 260 1200 300 1170 325 1220 345 1250 355 1175",
  "260 1060 290 1090 310 1060 330 1100 300 1150 255 1130",
  "290 989 285 1050 330 1070 335 1150",
  "380 989 370 1050 385 1120 435 1140 460 1050 485 989",
  "435 1140 470 1230 440 1290",
  "525 989 520 1120 555 1200 595 1165 575 1090 560 1040 530 1070 545 1150",
  "620 1000 650 1050 665 1150 700 1160 740 1060 790 1040 805 1010 805 1130 855 1150 880 1180",
  "665 1260 690 1200 715 1260 745 1290",
  "520 1255 560 1250 600 1290",
  "665 1160 670 1290",
  "850 1010 880 1080 910 1060 945 1080 930 1150 890 1100",
  "945 989 950 1060 930 1150 975 1185 1005 1150 1030 1060 1015 989",
  "1005 1150 1010 1230 1045 1180 1075 1230 1040 1290",
  "1060 989 1075 1100 1060 1180 1120 1200 1170 1180 1210 1290",
  "1170 1100 1200 1140 1215 1060 1245 1060 1220 1150 1170 1100 1170 989",
  "1245 989 1260 1100 1250 1200 1270 1290",
  "1325 989 1340 1060 1310 1130 1320 1250 1345 1170 1340 1060",
  "1410 989 1420 1100 1400 1180 1420 1250",
  "760 1290 790 1200 810 1250 805 1130",
];

function Lines({ set, transform, amp }) {
  return (
    <g transform={transform} stroke="#b1c68a" strokeWidth="1.400">
      {set.map((l, i) => (
        <path key={i} d={rough(parse(l), amp, i + 1)} vectorEffect="non-scaling-stroke" />
      ))}
    </g>
  );
}

function MapCanvas() {
  return (
    <svg viewBox="0 0 1600 1364" preserveAspectRatio="xMinYMin slice" className="size-full" fill="none" role="img" aria-label="Map canvas">
      <rect width="1600" height="1364" fill="#d3eba5" />
      <Lines set={northLines} transform="translate(725 -266) scale(.5486 .4083)" amp={6} />
      <Lines set={eastLines} transform="translate(1365 234) scale(.3333)" amp={7} />
      <Lines set={southLines} transform="translate(1385 634) scale(.3333 .4656)" amp={6} />
      <Lines set={bottomLines} transform="translate(35 934) scale(.8803 .3333)" amp={7} />
      <g transform="translate(1365 234) scale(.3333)" strokeLinejoin="round">
        <path
          d="M40 120 78 142 120 168 155 205 192 250 158 265 140 312 172 318 226 326 228 385 240 425 290 488 320 548 343 627 470 611 482 675 520 718 550 740 562 782 580 795 588 825 570 830 440 850 408 856 394 868 392 882 275 905 219 912 221 975 229 988 215 1010 213 1036 160 1040 150 990 138 944 120 962 118 990 78 985 40 985z"
          fill="#f1a3b0"
          stroke="#1c1c1c"
          strokeWidth="5"
        />
        <path d="M60 1010 80 1010 105 1030 95 1035 78 1025 90 1075 98 1115 78 1135 50 1130z" fill="#f1a3b0" stroke="#1c1c1c" strokeWidth="5" />
        <path d="M392 622 400 634 396 650 420 656 404 664 412 672 385 672 384 664 362 668 352 692 334 700 340 710 318 722 306 706 292 726 294 704 277 688 300 690 290 700 312 710 330 700 350 712 380 708 384 690 398 702 420 708 440 694 470 690 488 690 490 712 510 720 506 732 528 736 526 770 546 784 562 810 546 824 588 825 580 795 562 782 550 740 520 718 482 675 472 630 458 640 440 648 430 650 418 634 408 640z" fill="#75a9e8" />
        <path d="M78 455 100 475 120 472 118 510 132 545 122 600 90 640 78 670" stroke="#75a9e8" strokeWidth="12" />
        <path d="M78 150 110 160 130 185 140 225 158 262 185 248M158 265 140 310 78 352M78 855 100 828 130 815 168 785M78 1010 108 1028" stroke="#6f9bd0" strokeWidth="5" />
        <path
          d="M78 210 130 205M78 303 158 265M78 365 118 378 145 392 125 430 92 462M78 508 215 520 228 480 218 425 232 408M125 512 155 520 165 545 190 550 185 570 205 575 175 600 180 620 205 618 230 632 250 610 275 628 270 645 215 655 195 645 165 655 165 670 212 675M205 595 235 570 255 580 250 605 225 620 205 595M235 568 250 545 280 555 322 550M78 680 170 682 228 662 343 627M78 625 120 630 165 615 180 620M78 590 100 610M78 545 118 560M125 682 145 700 135 715 205 718 220 690 215 670M220 690 235 708 272 712 277 775 270 785 218 790 200 755 165 760 130 775 105 800 108 820 90 830 110 870 125 865 118 840 140 815M277 775 335 775 368 782 376 822 360 828 364 860 362 884M78 775 105 765 125 745 100 725 78 740M125 750 150 735 150 760 170 735 172 755M80 790 78 760M140 690 140 720"
          stroke="#1c1c1c"
          strokeWidth="4"
        />
      </g>
      <path d="M746 1262h22l-6 10h-10z" fill="#f1a3b0" stroke="#1c1c1c" strokeWidth="2" />
    </svg>
  );
}

/* ---------- left panels ---------- */

const browserRows = [
  [0, "open", <Star />, "Favorites"],
  [1, "shut", <Folder />, "/Users/raph/Documents/GIS"],
  [1, "open", <Folder open />, "/Users/raph/Documents/GIS"],
  [2, "shut", <QIcon />, "IDF example"],
  [2, "shut", <Database />, "IDF.gpkg"],
  [2, "shut", <Database />, "Session5exports.gpkg"],
  [2, "open", <Database />, "Session6-London.gpkg"],
  [3, "shut", <TableIcon />, "Census"],
  [3, "shut", <Polygon />, "FloodZones"],
  [3, "shut", <Polygon />, "GreaterLondonBoundaries"],
  [3, "shut", <Polygon />, "LSOA"],
  [3, "shut", <Polygon />, "LSOA-fixed"],
  [3, "shut", <Polygon />, "LSOA_London"],
  [3, "shut", <Polygon active />, "LSOA_London_Census", true],
  [3, "", <QIcon />, "Session6-Solution"],
  [3, "", <QIcon />, "Session6-Start"],
  [1, "shut", <Folder />, "/Users/raph/Downloads"],
  [0, "shut", <Bookmarks />, "Spatial Bookmarks"],
];
const indents = ["pl-0", "pl-10", "pl-20", "pl-[120px]"];

const Disclosure = ({ state }) => (
  <svg viewBox="0 0 16 16" className="size-4 shrink-0" aria-hidden="true">
    {state === "open" && <path d="M0 4h16l-8 8z" fill="#5c5c5c" />}
    {state === "shut" && <path d="M4 1v14l8-7z" fill="#5c5c5c" />}
  </svg>
);

function BrowserPanel() {
  return (
    <section aria-label="Browser" className="flex flex-col">
      <h2 className="flex h-10 items-center text-[22px] text-[#262626]">Browser</h2>
      <div className="-ml-px flex h-14">
        <Tool label="Add selected layers" className="w-[50px]"><AddLayer /></Tool>
        <Tool label="Refresh" className="w-[50px]"><Refresh /></Tool>
        <Tool label="Filter browser" className="w-[50px]"><Funnel /></Tool>
        <Tool label="Collapse all" className="w-[50px]"><TreeArrow /></Tool>
        <Tool label="Properties" className="w-[50px]"><Info /></Tool>
      </div>
      <ul role="tree" className="mt-1 border-y-2 border-r-2 border-[#b9b9b9] bg-white pt-px text-[25px]">
        {browserRows.map(([level, state, icon, name, selected], i) => (
          <li key={i} role="treeitem" aria-selected={!!selected} className={`flex h-9 items-center ${indents[level]} ${selected ? "bg-[#dcdcdc]" : ""}`}>
            <span className="flex w-7 shrink-0 justify-center"><Disclosure state={state} /></span>
            <span className="ml-3 mr-3 flex w-8 shrink-0">{icon}</span>
            <span className="whitespace-nowrap">{name}</span>
          </li>
        ))}
      </ul>
    </section>
  );
}

const layerRows = [
  ["FloodZones", true, "bg-[#72a8e8] border-[#72a8e8]", "text-[#262626]"],
  ["LSOA_London_Census", true, "bg-[#dfb4ca] border-[#b694a5]", "text-black underline underline-offset-4 decoration-2"],
  ["GreaterLondonBoundaries", true, "bg-[#f3dabe] border-[#5f564c]", "text-[#262626]"],
  ["LSOA", true, "bg-[#d3eba5] border-[#c3da98]", "text-[#262626]"],
  ["LSOA_London", false, "bg-[#f2cd68] border-[#b0954a]", "italic text-[#848484]"],
  ["LSOA-fixed", false, "bg-[#d3eba5] border-[#c3da98]", "italic text-[#848484]"],
];

function LayersPanel() {
  return (
    <section aria-label="Layers" className="flex flex-1 flex-col">
      <div className="flex justify-center pt-[3px]">
        <div className="flex gap-1">{Array.from({ length: 6 }, (_, i) => <span key={i} className="size-[3px] bg-[#c0c0c0]" />)}</div>
      </div>
      <h2 className="flex h-12 items-center text-[22px] text-[#262626]">Layers</h2>
      <div className="-ml-px flex h-[52px]">
        <Tool label="Open layer styling panel" className="w-[50px]"><Brush /></Tool>
        <Tool label="Add group" className="w-[50px]"><AddGroup /></Tool>
        <Tool label="Manage map themes" className="w-[50px]"><Eye /></Tool>
        <Tool label="Filter legend" className="w-[50px]"><Funnel /></Tool>
        <Tool label="Filter by expression" className="w-[50px]"><EpsFilter /></Tool>
        <Tool label="Expression filter menu" className="w-[25px]"><Down /></Tool>
        <Tool label="Expand all" className="w-[50px]"><TreeArrow down /></Tool>
        <Tool label="Collapse all" className="w-[50px]"><TreeArrow /></Tool>
        <Tool label="Remove layer" className="w-[50px]"><RemoveLayer /></Tool>
      </div>
      <ul className="mt-[5px] flex-1 border-y-2 border-r-2 border-[#b9b9b9] bg-white text-[26px] font-semibold">
        <li className="flex h-9 items-center gap-3 pl-10 text-[#262626]"><TableIcon />Census</li>
        {layerRows.map(([name, on, swatch, text]) => (
          <li key={name} className={`flex h-9 items-center pl-10 ${name === "LSOA_London_Census" ? "bg-[#dcdcdc]" : ""}`}>
            <Check label={name} defaultChecked={on} hideLabel />
            <span className={`ml-3 size-8 border-2 ${swatch}`} />
            <span className={`ml-3 whitespace-nowrap ${text}`}>{name}</span>
          </li>
        ))}
      </ul>
    </section>
  );
}

/* ---------- right panel ---------- */

const toolboxRows = [
  [<Clock />, "Recently used"],
  ...["Cartography", "Database", "File tools", "Interpolation", "Layer tools", "Mesh", "Network analysis", "Plots", "Raster analysis", "Raster creation", "Raster terrain analysis", "Raster tools", "Vector analysis", "Vector creation", "Vector general", "Vector geometry", "Vector overlay", "Vector selection", "Vector table", "Vector tiles"].map((n) => [<QIcon />, n]),
  [<Gdal />, "GDAL"],
  [<Grass />, "GRASS"],
  [<QuickOsm size="size-8" />, "QuickOSM"],
  [<Saga />, "SAGA"],
];

function Toolbox() {
  return (
    <section aria-label="Processing Toolbox" className="ml-[13px] flex w-[604px] shrink-0 flex-col">
      <div className="flex h-10 items-center pr-[2px] pl-[9px]">
        <h2 className="flex-1 text-[22px] text-[#262626]">Processing Toolbox</h2>
        <button type="button" aria-label="Float panel">
          <Svg size="size-[22px]" vb="0 0 22 22">
            <rect x="1" y="1" width="20" height="20" rx="4" stroke="#666" strokeWidth="1.600" />
            <path d="M5 9h8v8H5zM9 9V5h8v8h-4" stroke="#666" strokeWidth="1.600" />
          </Svg>
        </button>
        <button type="button" aria-label="Close panel" className="ml-[6px]">
          <Svg size="size-[22px]" vb="0 0 22 22">
            <rect x="1" y="1" width="20" height="20" rx="4" stroke="#666" strokeWidth="1.600" />
            <path d="m6 6 10 10M16 6 6 16" stroke="#555" strokeWidth="4" />
          </Svg>
        </button>
      </div>
      <div className="flex h-14 items-center pl-[7px]">
        <Tool label="Models" className="w-[50px]"><Gears /></Tool>
        <Tool label="Scripts" className="w-[50px]"><PythonSmall /></Tool>
        <Tool label="History" className="w-[50px]"><Clock /></Tool>
        <Tool label="Results viewer" className="w-[50px]"><Report /></Tool>
        <span className="mx-[5px] h-6 w-[3px] bg-white" />
        <Tool label="Edit in place" className="w-[50px]"><EditNote /></Tool>
        <span className="mx-[5px] h-6 w-[3px] bg-white" />
        <Tool label="Options" className="w-[50px]"><Options /></Tool>
      </div>
      <div className="mt-[5px] flex h-12 items-center rounded-l-md border-2 border-r-0 border-[#a9a9a9] bg-white pl-4">
        <Lens />
        <input type="search" aria-label="Search algorithms" placeholder="Search…" className="ml-4 h-full min-w-0 flex-1 text-[25px] outline-none placeholder:text-[#808080]" />
      </div>
      <ul role="tree" className="flex-1 border-b-2 border-l-2 border-[#b9b9b9] bg-white pt-[2px] text-[25px]">
        {toolboxRows.map(([icon, name]) => (
          <li key={name} role="treeitem" className="flex h-9 items-center pl-3">
            <Disclosure state="shut" />
            <span className="ml-[18px] mr-3 flex">{icon}</span>
            {name}
          </li>
        ))}
      </ul>
    </section>
  );
}

/* ---------- dialog ---------- */

const pages = [
  [<Info size="size-[50px]" />, "Information"],
  [<SourceIcon />, "Source"],
  [<Brush size="size-12" faded />, "Symbology"],
  [<LabelsIcon />, "Labels"],
  [<MasksIcon />, "Masks"],
  [<CubeIcon />, "3D View"],
  [<DiagramsIcon />, "Diagrams"],
  [<FieldsIcon />, "Fields"],
  [<FormIcon />, "Attributes Form"],
  [<JoinsIcon />, "Joins"],
  [<StorageIcon />, "Auxiliary Storage"],
  [<ActionsIcon />, "Actions"],
  [<DisplayIcon />, "Display"],
  [<Brush palette={false} size="size-12" />, "Rendering"],
  [<TemporalIcon />, "Temporal"],
  [<VariablesIcon />, "Variables"],
  [<MetadataIcon />, "Metadata"],
  [<DependenciesIcon />, "Dependencies"],
  [<LegendIcon />, "Legend"],
  [<LayoutIcon />, ""],
];

function Sidebar() {
  return (
    <div className="flex w-[300px] shrink-0 flex-col overflow-hidden bg-[#5b5b5b]">
      <div className="flex h-[47px] items-center rounded-xs border-2 border-[#a9a9a9] bg-white pl-4">
        <Lens />
        <input type="search" aria-label="Search settings" className="ml-2 h-full min-w-0 flex-1 text-[25px] outline-none" />
      </div>
      <div className="mt-3 flex min-h-0 flex-1">
        <nav aria-label="Layer property pages" className="min-w-0 flex-1 overflow-hidden">
          {pages.map(([icon, name]) => {
            const selected = name === "Symbology";
            return (
              <button
                key={name}
                type="button"
                aria-label={name || "Server"}
                aria-current={selected ? "page" : undefined}
                className={`flex w-full items-center gap-4 text-left text-[25px] leading-[31px] ${name === "Auxiliary Storage" ? "h-20" : "h-[72px]"} ${selected ? "bg-[#ebebeb] pl-[15px] text-black" : "pl-[9px] text-white"}`}
              >
                <span className="flex w-[50px] shrink-0 justify-center">{icon}</span>
                <span className={name === "Auxiliary Storage" ? "w-[120px]" : ""}>{name}</span>
              </button>
            );
          })}
        </nav>
        <div className="flex w-7 shrink-0 flex-col bg-[#e2e2e2]">
          <span className="flex h-[27px] shrink-0 items-center justify-center border-b-2 border-[#b5b5b5] bg-[#f6f6f6]"><Up /></span>
          <span className="flex-1 border-b-2 border-[#b5b5b5] bg-linear-to-r from-white to-[#f0f0f0]" />
          <span className="h-[130px] shrink-0 border-x-2 border-[#d2d2d2]" />
          <span className="flex h-[27px] shrink-0 items-center justify-center border-t-2 border-[#b5b5b5] bg-[#f6f6f6]"><Down /></span>
        </div>
      </div>
    </div>
  );
}

const fields = [
  ["123", "fid"],
  ["123", "OBJECTID"],
  ["123", "BNG_E"],
  ["123", "BNG_N"],
  ["1.2", "LONG"],
  ["1.2", "LAT"],
  ["1.2", "Shape__Are"],
  ["1.2", "Shape__Len"],
  ["123", "Census_fid"],
];

const GraduatedIcon = () => (
  <svg viewBox="0 0 28 30" className="pointer-events-none absolute top-[9px] left-4 h-[30px] w-7" aria-hidden="true">
    <rect x="1" y="2" width="20" height="6" fill="#ffdc00" stroke="#f5a400" strokeWidth="2" />
    <rect x="5" y="12" width="20" height="6" fill="#ff4a00" stroke="#c22a00" strokeWidth="2" />
    <rect x="1" y="22" width="20" height="6" fill="#bb0e05" stroke="#6e0a04" strokeWidth="2" />
  </svg>
);
const QuantileIcon = () => (
  <svg viewBox="0 0 32 32" className="pointer-events-none absolute top-2 left-3 size-8" fill="none" aria-hidden="true">
    <path d="M3 1h26v30H3zM16 1v30" stroke="#d4b92c" strokeWidth="2" />
    <path d="M3 5v22M9 5v22M23 5v22M30 5v22" stroke="#6d97c8" strokeWidth="1.500" />
    <path d="M4 8h4v5H4zm10 0h4v5h-4zm10 0h4v5h-4zM4 15h4v4H4zm10 0h4v4h-4zm10 0h4v4h-4zM4 21h4v5H4zm10 0h4v5h-4zm10 0h4v5h-4z" fill="#10131c" />
  </svg>
);

function SymbologyPage() {
  return (
    <div className="flex min-w-0 flex-1 flex-col pt-[6px] pr-[7px] pb-[6px] pl-2">
      <div className="relative">
        <GraduatedIcon />
        <select aria-label="Renderer" className={`block h-12 w-full appearance-none pl-[49px] ${shade}`}>
          <option>Graduated</option>
        </select>
        <Down className="pointer-events-none absolute top-5 right-[14px]" />
      </div>

      <div className="mt-3 flex h-12 items-center">
        <label htmlFor="value" className="w-[190px] shrink-0">Value</label>
        <div className="relative z-10 flex h-12 flex-1 overflow-visible rounded-t-md border-2 border-[#a9a9a9] bg-white">
          <input id="value" type="text" role="combobox" aria-expanded="true" aria-controls="value-list" className="min-w-0 flex-1 bg-linear-to-b from-white to-[#f7f7f7] px-3 outline-none" />
          <button type="button" aria-label="Show fields" className="flex w-10 items-center justify-center border-l-2 border-[#bdbdbd] bg-[#dadada]"><Down /></button>
          <ul id="value-list" role="listbox" aria-label="Fields" className="absolute -inset-x-[2px] top-[44px] border-2 border-[#8e8e8e] bg-white shadow-[0_8px_24px_rgba(0,0,0,0.3)]">
            {fields.map(([kind, name]) => {
              const selected = name === "Census_fid";
              return (
                <li key={name} role="option" aria-selected={selected} className={`flex h-12 items-center pl-[5px] ${selected ? "bg-linear-to-b from-[#1b74e8] to-[#0a68e2] text-white" : ""}`}>
                  <span className={`w-[61px] text-[26px] font-bold ${selected ? "text-[#5f789c]" : "text-[#5e5e5e]"}`}>{kind}</span>
                  {name}
                </li>
              );
            })}
          </ul>
        </div>
        <button type="button" aria-label="Expression builder" className={`ml-[14px] flex h-12 w-[46px] items-center justify-center ${shade} font-['DejaVu_Serif',serif] text-[28px] leading-none text-[#5f3a6b]`}>Ɛ</button>
      </div>

      <div className="mt-3 flex h-11 items-center">
        <span className="w-[190px] shrink-0">Symbol</span>
        <button type="button" aria-label="Change symbol" className={`h-11 flex-1 px-[7px] py-[9px] ${shade}`}>
          <span className="block h-full border-2 border-[#b17a83] bg-[#eda5b1]" />
        </button>
        <button type="button" aria-label="Symbol menu" className={`ml-[2px] flex h-11 w-[22px] items-center justify-center ${shade}`}><Down /></button>
      </div>

      <div className="flex h-[75px] items-center">
        <label htmlFor="legend" className="w-[190px] shrink-0">Legend format</label>
        <input id="legend" type="text" className="h-11 min-w-0 flex-1 rounded-md border-2 border-[#a9a9a9] bg-white px-3" />
        <Check label="Trim" defaultChecked className="ml-4 pr-3" />
      </div>

      <div className="flex h-[54px] items-center">
        <span className="w-[190px] shrink-0">Color ramp</span>
        <button type="button" aria-label="Change color ramp" className={`h-full flex-1 px-2 py-[9px] ${shade}`}>
          <span className="block h-full bg-linear-to-r from-white from-0% to-[#ff0000] to-90%" />
        </button>
        <button type="button" aria-label="Color ramp menu" className={`ml-[2px] flex h-full w-[22px] items-center justify-center ${shade}`}><Down /></button>
      </div>

      <div role="tablist" className="mt-[13px] flex h-[53px] items-end border-b-2 border-[#b5b5b5] text-[#262626]">
        <button type="button" role="tab" aria-selected="true" className="-mb-[2px] h-[55px] w-[145px] rounded-t-md border-2 border-b-0 border-[#a9a9a9] bg-[#f8f8f8]">Classes</button>
        <button type="button" role="tab" aria-selected="false" className="h-12 rounded-t-md border-2 border-b-0 border-l-0 border-[#b9b9b9] bg-[#e6e6e6] px-6">Histogram</button>
      </div>

      <div className="mt-5 flex-1 border-2 border-[#b9b9b9] bg-white">
        <table className="w-full table-fixed text-[22px] leading-8 text-[#262626]">
          <thead>
            <tr className="h-8 border-b-2 border-[#b5b5b5] bg-linear-to-b from-white to-[#ececec] text-left">
              <th className="w-[131px] border-r-2 border-[#c6c6c6] pr-[6px] pl-1 font-normal">
                <span className="flex items-center justify-between">Symbol <Down /></span>
              </th>
              <th className="w-[270px] border-r-2 border-[#c6c6c6] pl-1 font-normal">Values</th>
              <th className="pl-1 font-normal">Legend</th>
            </tr>
          </thead>
        </table>
      </div>

      <div className="mt-[14px] flex h-12 items-center">
        <label htmlFor="mode">Mode</label>
        <div className="relative ml-[14px]">
          <select id="mode" className={`block h-12 w-[375px] appearance-none pl-[47px] ${shade}`}>
            <option>Equal Count (Quantile)</option>
          </select>
          <QuantileIcon />
          <Down className="pointer-events-none absolute top-[18px] right-[14px]" />
        </div>
        <label htmlFor="classes" className="mr-[14px] ml-auto">Classes</label>
        <div className="flex h-[46px] w-[140px] overflow-hidden rounded-md border-2 border-[#a9a9a9] bg-white">
          <input id="classes" type="text" role="spinbutton" aria-valuenow="5" defaultValue="5" className="min-w-0 flex-1 pl-2 outline-none" />
          <span className="flex w-7 flex-col items-center justify-center gap-2 border-l-2 border-[#c6c6c6] bg-[#f4f4f4]"><Up /><Down /></span>
        </div>
      </div>

      <div className="mt-[14px] flex h-12 gap-[13px] text-[#262626]">
        <Push className="w-[159px]">Classify</Push>
        <Push className="w-[55px]" aria-label="Add class">
          <Svg size="size-7" vb="0 0 28 28">
            <path d="M10 1h8v9h9v8h-9v9h-8v-9H1v-8h9z" fill="#fff" stroke="#5a8c5a" strokeWidth="2" />
            <path d="M14 5v18M5 14h18" stroke="#5a8c5a" strokeWidth="4" />
          </Svg>
        </Push>
        <Push className="w-[55px]" aria-label="Delete class">
          <Svg size="size-7" vb="0 0 28 28">
            <path d="M1 9h26v10H1z" fill="#fff" stroke="#ef4444" strokeWidth="2" />
            <path d="M5 14h18" stroke="#ef4444" strokeWidth="4" />
          </Svg>
        </Push>
        <Push className="w-[159px]">Delete All</Push>
        <Push className="ml-auto w-[159px] gap-[10px]">Advanced <Down size="h-[7px] w-3" /></Push>
      </div>

      <div className="mt-5 h-7 text-[#262626]">
        <Check label="Link class boundaries" defaultChecked gap="gap-[10px]" />
      </div>

      <button type="button" aria-expanded="false" className="mt-[43px] flex h-7 items-center gap-5 self-start pl-2 font-bold">
        <svg viewBox="0 0 16 22" className="h-[22px] w-4" aria-hidden="true"><path d="M1 1v20l14-10z" fill="#444" stroke="#111" strokeWidth="1.500" /></svg>
        Layer Rendering
      </button>

      <div className="mt-[15px] flex h-12 gap-[13px] text-[#262626]">
        <Push className="w-[159px]">Help</Push>
        <Push className="relative w-[159px] pr-6">Style <Down size="h-[7px] w-3" className="absolute right-2" /></Push>
        <Push className="w-[159px]">Apply</Push>
        <Push className="ml-auto w-[159px]">Cancel</Push>
        <button type="button" className="flex h-12 w-[159px] items-center justify-center rounded-md border-2 border-[#5a9ae0] bg-linear-to-b from-white to-[#dfe5ee]">OK</button>
      </div>
    </div>
  );
}

function LayerProperties() {
  return (
    <div role="dialog" aria-label="Layer Properties" className="absolute top-[14px] right-[826px] bottom-[162px] left-[456px] flex flex-col overflow-hidden rounded-[20px] bg-[#ebebeb] text-[25px] shadow-[0_0_2px_rgba(0,0,0,0.5),0_36px_80px_rgba(0,0,0,0.5)]">
      <header className="relative flex h-[57px] shrink-0 items-center justify-center border-b-2 border-[#c5c8cb] bg-[#eceef0]">
        <div className="absolute left-4 flex gap-4">
          <button type="button" aria-label="Close" className="size-6 rounded-full border border-[#d65548] bg-[#ed6a5e]" />
          <button type="button" aria-label="Minimize" className="size-6 rounded-full border border-[#bfbfbf] bg-[#d1d2d3]" />
          <button type="button" aria-label="Zoom" className="size-6 rounded-full border border-[#bfbfbf] bg-[#d1d2d3]" />
        </div>
        <h1 className="text-[26px] font-bold text-[#454545]">Layer Properties — LSOA_London_Census — Symbology</h1>
      </header>
      <div className="flex min-h-0 flex-1">
        <Sidebar />
        <SymbologyPage />
      </div>
    </div>
  );
}

/* ---------- status bar ---------- */

const field = "border-2 border-[#a9a9a9] bg-linear-to-b from-white to-[#ececec] rounded-md";

function Spin({ id, label, value, width, gap = "mr-2" }) {
  return (
    <div className="flex items-center">
      <label htmlFor={id} className={gap}>{label}</label>
      <div className={`flex h-[46px] overflow-hidden ${field} ${width}`}>
        <input id={id} type="text" role="spinbutton" defaultValue={value} className="min-w-0 flex-1 pl-2 outline-none" />
        <span className="flex w-7 flex-col items-center justify-center gap-2 border-l-2 border-[#b5b5b5]"><Up /><Down /></span>
      </div>
    </div>
  );
}

function StatusBar() {
  return (
    <footer className="flex h-[62px] shrink-0 items-center bg-linear-to-b from-[#e9e9e9] to-[#cfcfcf] pt-[2px] text-[22px] text-black">
      <div className={`flex h-12 w-[427px] items-center pl-4 ${field}`}>
        <Lens />
        <input type="search" aria-label="Locator" placeholder="Type to locate (⌘K)" className="ml-4 h-full min-w-0 flex-1 text-[25px] outline-none placeholder:text-[#808080]" />
      </div>
      <span className="ml-[17px]">1 legend entries removed.</span>
      <div className="ml-auto flex items-center">
        <label htmlFor="coord" className="mr-2">Coordinate</label>
        <input id="coord" type="text" defaultValue="505254,174709" className={`h-[44px] w-[198px] text-center ${field}`} />
        <button type="button" aria-label="Toggle extents" className="ml-2 flex">
          <Svg size="size-8">
            <path d="M20 8 6 14m14 8L8 30m26-12 12 4M30 6l8-4M14 42l8-4M6 38l4 4" stroke="#111" strokeWidth="3" />
            <rect x="14" y="2" width="14" height="24" rx="7" fill="#ddd" stroke="#111" strokeWidth="4" transform="rotate(-20 21 14)" />
            <rect x="24" y="20" width="16" height="24" rx="8" fill="#ddd" stroke="#111" strokeWidth="4" transform="rotate(30 32 32)" />
            <path d="m10 28 26-14" stroke="#111" strokeWidth="4" />
            <circle cx="31" cy="34" r="3.500" fill="#111" />
          </Svg>
        </button>
        <label htmlFor="scale" className="mr-2 ml-7">Scale</label>
        <div className={`flex h-12 w-[185px] overflow-hidden ${field}`}>
          <input id="scale" type="text" defaultValue="1:435015" className="min-w-0 flex-1 pl-[6px] outline-none" />
          <button type="button" aria-label="Scale presets" className="flex w-[38px] items-center justify-center border-l-2 border-[#b5b5b5]"><Down /></button>
        </div>
        <button type="button" aria-label="Lock scale" className="ml-6 flex">
          <Svg size="h-8 w-[26px]" vb="0 0 26 32">
            <path d="M6 16V9a7 7 0 0 1 14 0v7" stroke="#8a8a8a" strokeWidth="3" />
            <rect x="1" y="14" width="24" height="17" rx="2" fill="#636363" />
          </Svg>
        </button>
        <span className="w-[19px]" />
        <Spin id="magnifier" label="Magnifier" value="100%" width="w-[179px]" />
        <span className="w-5" />
        <Spin id="rotation" label="Rotation" value="0.0 °" width="w-[186px]" gap="mr-4" />
        <Check label="Render" defaultChecked gap="gap-[10px]" className="ml-3" />
        <button type="button" className="ml-8 flex items-center gap-[5px]">
          <Svg size="size-8">
            <circle cx="24" cy="26" r="17" stroke="#8a8a8a" strokeWidth="2.500" />
            <path d="M24 26v17M16 26c0 8 3 13 8 17 5-4 8-9 8-17M9 34h30" stroke="#8a8a8a" strokeWidth="2.500" />
            <path d="M14 4h20l12 18-6 4H8l-6-4z" fill="#6e6e6e" />
            <path d="M19 4 14 25M29 4l5 21M8 13h32M24 4v22" stroke="#dcdcdc" strokeWidth="2" />
          </Svg>
          EPSG:27700
        </button>
        <button type="button" aria-label="Messages" className="mr-[42px] ml-12 flex items-center">
          <Svg size="size-8" vb="0 0 32 32">
            <ellipse cx="16" cy="14" rx="16" ry="12.500" fill="#636363" />
            <path d="m18 25 12 5-5-9z" fill="#636363" />
            <circle cx="8.500" cy="14" r="2.200" fill="#fff" /><circle cx="16" cy="14" r="2.200" fill="#fff" /><circle cx="23.500" cy="14" r="2.200" fill="#fff" />
          </Svg>
        </button>
        <svg viewBox="0 0 16 16" className="mt-8 size-4" aria-hidden="true">
          <path d="M13 0h3v3h-3zM13 6h3v3h-3zM7 6h3v3H7zM13 12h3v3h-3zM7 12h3v3H7zM1 12h3v3H1z" fill="#b5b5b5" />
        </svg>
      </div>
    </footer>
  );
}

/* ---------- page ---------- */

const bar = "flex shrink-0 items-center border-b-2 border-[#b3b3b3] bg-linear-to-b from-[#f7f7f7] to-[#ebebeb]";

export default function App() {
  return (
    <div className="h-screen overflow-hidden bg-[#0b1420] pb-[2px] font-[Inter,sans-serif]">
      <div className="relative flex h-full flex-col overflow-hidden rounded-b-[20px] bg-[#ebebeb]">
        <header className="h-[31px] shrink-0 overflow-hidden border-b-2 border-[#d0d2d4] bg-[#eceef0]">
          <div className="relative -mt-[26px] flex h-14 items-center justify-center">
            <div className="absolute left-2 flex gap-4">
              <button type="button" aria-label="Close window" className="size-6 rounded-full border border-[#bfbfbf] bg-[#d1d2d3]" />
              <button type="button" aria-label="Minimize window" className="size-6 rounded-full border border-[#bfbfbf] bg-[#d1d2d3]" />
              <button type="button" aria-label="Zoom window" className="size-6 rounded-full border border-[#bfbfbf] bg-[#d1d2d3]" />
            </div>
            <p className="text-[26px] font-bold text-[#454545]">*Session6-Solution — QGIS</p>
          </div>
        </header>

        <div className={`h-[76px] ${bar}`}>
          <span className="flex w-[17px] pl-[2px]"><Grip /></span>
          <Tool label="New project"><NewFile /></Tool>
          <Tool label="Open project"><OpenFolder /></Tool>
          <Tool label="Save project"><Save /></Tool>
          <Tool label="New print layout"><NewLayout /></Tool>
          <Tool label="Layout manager"><LayoutManager /></Tool>
          <Tool label="Style manager"><StyleManager /></Tool>
          <span className="flex w-[33px] pl-4"><Grip /></span>
          <Tool label="Pan map" className="h-[60px] w-16 rounded-md border-2 border-[#b0b0b0] bg-[#e2e2e2]" />
          <div className="ml-auto flex w-[826px] items-center">
            <Tool label="Text annotation" className="w-[70px]"><TextNote /></Tool>
            <Tool label="Annotation menu" className="w-6"><Down /></Tool>
          </div>
        </div>

        <div className={`h-[78px] ${bar}`}>
          <span className="flex w-[17px] pl-[2px]"><Grip /></span>
          <Tool label="Data source manager"><DataSource /></Tool>
          <Tool label="New GeoPackage layer"><GeoPackage /></Tool>
          <Tool label="New shapefile layer"><Shapefile /></Tool>
          <Tool label="New SpatiaLite layer"><Feather /></Tool>
          <Tool label="New scratch layer"><Memory /></Tool>
          <span className="mx-[6px] h-14 w-[3px] bg-white" />
          <Tool label="New virtual layer"><VirtualLayer /></Tool>
          <span className="mx-[5px] h-14 w-[3px] bg-white" />
          <div className="ml-auto flex w-[850px] items-center">
            <Tool label="Python console" className="w-12">
              <Svg>
                <g transform="scale(.92)"><PyShape /></g>
                <path d="M28 32h8v12h-8z" fill="#e8c13a" />
                <path d="m36 34 10 5-10 6" stroke="#333" strokeWidth="3" />
              </Svg>
            </Tool>
            <Grip className="ml-[25px]" />
            <Tool label="Help contents" className="ml-[14px] w-[52px]"><Book /></Tool>
            <Grip className="ml-[22px]" />
          </div>
        </div>

        <div className={`h-[77px] ${bar}`}>
          <span className="flex w-[17px] pl-[2px]"><Grip /></span>
          <Tool label="Select features"><SelectFeatures /></Tool>
          <Tool label="Select features menu" className="w-[25px]"><Down /></Tool>
          <Tool label="Select by value"><SelectByValue /></Tool>
          <Tool label="Select by value menu" className="w-[25px]"><Down /></Tool>
          <Tool label="Deselect features"><Deselect /></Tool>
          <Tool label="Deselect menu" className="w-[23px]"><Down /></Tool>
          <Tool label="Select by location"><SelectLocation /></Tool>
          <span className="flex w-10 justify-center"><Grip /></span>
          <Tool label="QuickOSM" className="w-12"><QuickOsm /></Tool>
        </div>

        <main className="flex min-h-0 flex-1 pt-[2px]">
          <div className="flex w-[702px] shrink-0 flex-col">
            <BrowserPanel />
            <LayersPanel />
          </div>
          <div className="ml-[13px] min-w-0 flex-1 overflow-hidden border-r-2 border-b-2 border-[#b3b3b3]">
            <MapCanvas />
          </div>
          <Toolbox />
        </main>

        <StatusBar />
        <LayerProperties />
      </div>
    </div>
  );
}
